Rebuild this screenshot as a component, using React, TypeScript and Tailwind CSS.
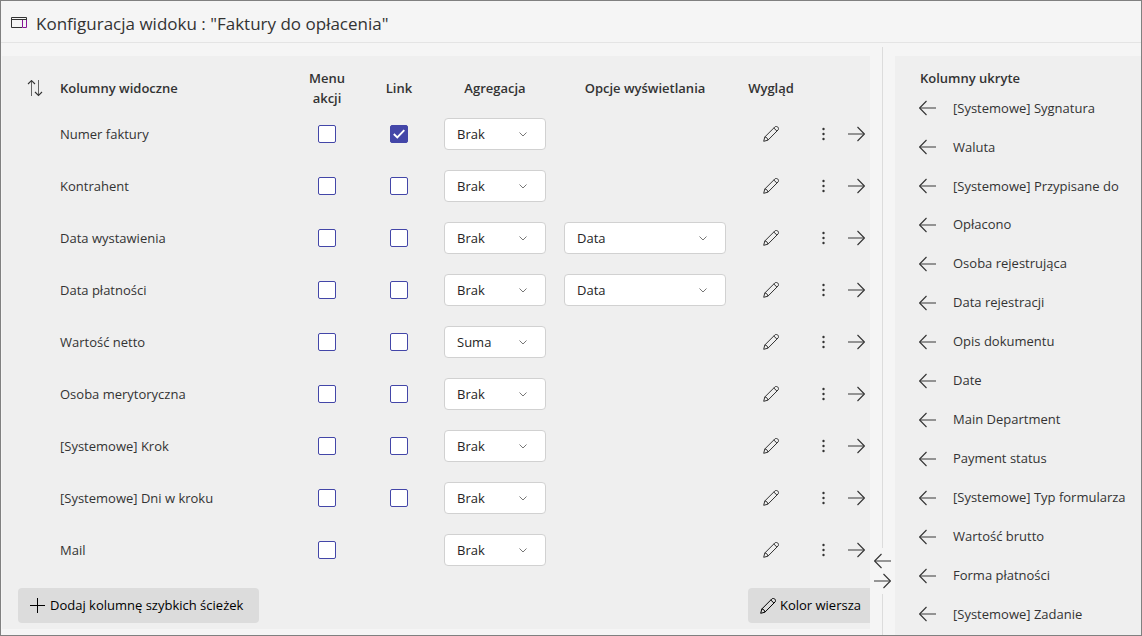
import { useState } from "react";

type Column = {
  name: string;
  link?: boolean;
  linked?: boolean;
  aggregation: string;
  display?: string;
};

const visibleColumns: Column[] = [
  { name: "Numer faktury", link: true, linked: true, aggregation: "Brak" },
  { name: "Kontrahent", link: true, aggregation: "Brak" },
  { name: "Data wystawienia", link: true, aggregation: "Brak", display: "Data" },
  { name: "Data płatności", link: true, aggregation: "Brak", display: "Data" },
  { name: "Wartość netto", link: true, aggregation: "Suma" },
  { name: "Osoba merytoryczna", link: true, aggregation: "Brak" },
  { name: "[Systemowe] Krok", link: true, aggregation: "Brak" },
  { name: "[Systemowe] Dni w kroku", link: true, aggregation: "Brak" },
  { name: "Mail", aggregation: "Brak" },
];

const hiddenColumns = [
  "[Systemowe] Sygnatura",
  "Waluta",
  "[Systemowe] Przypisane do",
  "Opłacono",
  "Osoba rejestrująca",
  "Data rejestracji",
  "Opis dokumentu",
  "Date",
  "Main Department",
  "Payment status",
  "[Systemowe] Typ formularza",
  "Wartość brutto",
  "Forma płatności",
  "[Systemowe] Zadanie",
];

function ViewIcon() {
  return (
    <svg width="16" height="14" viewBox="0 0 16 14" fill="none" aria-hidden="true">
      <path d="M11.5 3V10.5H15.5V3" stroke="#881798" />
      <path d="M11 10.5H0.5V0.5H15.5V3M0.5 2.5H15.5" stroke="#333" />
    </svg>
  );
}

function ArrowIcon({ left = false }: { left?: boolean }) {
  return (
    <svg width="17" height="16" viewBox="0 0 17 16" fill="none" className="shrink-0" aria-hidden="true">
      <path d={left ? "M1 8H17" : "M0 8H16"} stroke="#555" strokeWidth="1.2" />
      <path d={left ? "M7.5 1L0.6 8L7.5 15" : "M9.5 1L16.4 8L9.5 15"} stroke="#333" strokeWidth="1.1" />
    </svg>
  );
}

function SortIcon() {
  return (
    <svg width="16" height="17" viewBox="0 0 16 17" fill="none" aria-hidden="true">
      <path d="M4.5 1V16M11.5 0V15" stroke="#666" />
      <path d="M1 4L4.5 0.6L8 4M8 12L11.5 15.4L15 12" stroke="#333" strokeWidth="1.1" />
    </svg>
  );
}

function PencilIcon() {
  return (
    <svg width="16" height="16" viewBox="0 0 16 16" fill="none" stroke="currentColor" className="shrink-0" aria-hidden="true">
      <path d="M0.7 15.3L1.8 11L11.9 0.9C12.7 0.2 14 0.3 14.8 1.1C15.7 1.9 15.8 3.2 15 4L4.9 14.2L0.7 15.3Z" />
      <path d="M10.8 2L14 5.2M1.8 11C3.5 11.1 4.8 12.4 4.9 14.2" />
    </svg>
  );
}

function MoreIcon() {
  return (
    <svg width="4" height="14" viewBox="0 0 4 14" fill="#333" aria-hidden="true">
      <circle cx="2.5" cy="2" r="1.2" />
      <circle cx="2.5" cy="7" r="1.2" />
      <circle cx="2.5" cy="12" r="1.2" />
    </svg>
  );
}

function PlusIcon() {
  return (
    <svg width="16" height="16" viewBox="0 0 16 16" stroke="currentColor" className="shrink-0" aria-hidden="true">
      <path d="M7.5 0V15M0 7.5H15" />
    </svg>
  );
}

function Checkbox({ label, defaultChecked = false }: { label: string; defaultChecked?: boolean }) {
  const [checked, setChecked] = useState(defaultChecked);

  return (
    <span className="relative mx-auto block size-[18px]">
      <input
        type="checkbox"
        aria-label={label}
        checked={checked}
        onChange={(e) => setChecked(e.target.checked)}
        className="block size-[18px] appearance-none rounded-xs border border-[#4346a8] bg-white checked:bg-[#4346a8]"
      />
      {checked && (
        <svg width="18" height="18" viewBox="0 0 18 18" fill="none" className="pointer-events-none absolute inset-0" aria-hidden="true">
          <path d="M3.8 9L7.3 12.5L14.3 5.2" stroke="#fff" strokeWidth="1.9" />
        </svg>
      )}
    </span>
  );
}

function Select({ label, value, options }: { label: string; value: string; options: string[] }) {
  return (
    <span className="relative block">
      <select
        aria-label={label}
        defaultValue={value}
        className="block h-8 w-full appearance-none rounded border border-[#d1d1d1] bg-white pt-0.5 pr-8 pl-3 text-[#242424]"
      >
        {options.map((option) => (
          <option key={option}>{option}</option>
        ))}
      </select>
      <svg width="8" height="5" viewBox="0 0 8 5" fill="none" stroke="#777" className="pointer-events-none absolute top-[14px] right-[19px]" aria-hidden="true">
        <path d="M0.5 0.5L4 4L7.5 0.5" />
      </svg>
    </span>
  );
}

function VisibleColumns() {
  return (
    <main className="mt-[13px] mb-1.5 ml-px flex min-w-0 flex-1 flex-col bg-[#efefef] pt-3 pb-1.5 pl-4">
      <table className="w-full table-fixed">
        <colgroup>
          <col className="w-[42px]" />
          <col />
          <col className="w-[72px]" />
          <col className="w-[72px]" />
          <col className="w-[120px]" />
          <col className="w-[180px]" />
          <col className="w-[72px]" />
          <col className="w-8" />
          <col className="w-[31px]" />
        </colgroup>
        <thead>
          <tr className="h-10 leading-5">
            <th className="pl-[9px] text-left">
              <button className="block" aria-label="Zmień kolejność">
                <SortIcon />
              </button>
            </th>
            <th className="text-left font-semibold">Kolumny widoczne</th>
            <th className="px-3 font-semibold">Menu akcji</th>
            <th className="font-semibold">Link</th>
            <th className="font-semibold">Agregacja</th>
            <th className="font-semibold">Opcje wyświetlania</th>
            <th className="font-semibold">Wygląd</th>
            <th></th>
            <th></th>
          </tr>
        </thead>
        <tbody>
          {visibleColumns.map((column) => (
            <tr key={column.name} className="h-13">
              <td></td>
              <td className="pt-0.5">{column.name}</td>
              <td>
                <Checkbox label={`Menu akcji: ${column.name}`} />
              </td>
              <td>
                {column.link && <Checkbox label={`Link: ${column.name}`} defaultChecked={column.linked} />}
              </td>
              <td className="px-[9px]">
                <Select label={`Agregacja: ${column.name}`} value={column.aggregation} options={["Brak", "Suma"]} />
              </td>
              <td className="px-[9px]">
                {column.display && (
                  <Select label={`Opcje wyświetlania: ${column.name}`} value={column.display} options={["Data"]} />
                )}
              </td>
              <td>
                <button className="mx-auto block text-[#333]" aria-label="Edytuj wygląd">
                  <PencilIcon />
                </button>
              </td>
              <td>
                <button className="mx-auto block" aria-label="Więcej">
                  <MoreIcon />
                </button>
              </td>
              <td className="pl-[9px]">
                <button className="block" aria-label="Ukryj kolumnę">
                  <ArrowIcon />
                </button>
              </td>
            </tr>
          ))}
        </tbody>
      </table>

      <div className="mt-3 flex justify-between text-black">
        <button className="flex h-[35px] items-center gap-1 rounded bg-[#dcdcdc] pr-4 pl-3">
          <PlusIcon />
          Dodaj kolumnę szybkich ścieżek
        </button>
        <button className="flex h-[35px] items-center gap-1 rounded-l bg-[#dcdcdc] pr-[9px] pl-3">
          <PencilIcon />
          Kolor wiersza
        </button>
      </div>
    </main>
  );
}

function Splitter() {
  return (
    <div className="flex w-[25px] shrink-0 flex-col items-center pt-1">
      <div className="w-px flex-1 bg-[#dcdcdc]" />
      <div className="flex flex-col gap-1 py-[5px]">
        <button aria-label="Przesuń w lewo">
          <ArrowIcon left />
        </button>
        <button aria-label="Przesuń w prawo">
          <ArrowIcon />
        </button>
      </div>
      <div className="h-[41px] w-px bg-[#dcdcdc]" />
    </div>
  );
}

function HiddenColumns() {
  return (
    <aside className="mt-[13px] flex w-[246px] shrink-0 flex-col bg-[#efefef] pt-3 pb-px pl-6">
      <h2 className="pl-px leading-5 font-semibold">Kolumny ukryte</h2>
      <ul className="flex flex-1 flex-col pt-px">
        {hiddenColumns.map((name) => (
          <li key={name} className="flex flex-1 items-center gap-[17px] whitespace-nowrap">
            <button aria-label={`Pokaż kolumnę ${name}`}>
              <ArrowIcon left />
            </button>
            {name}
          </li>
        ))}
      </ul>
    </aside>
  );
}

export default function App() {
  return (
    <div className="flex min-h-screen flex-col border border-[#808080] bg-[#f5f5f5] font-['Open_Sans','Noto_Sans',sans-serif] text-[13px] text-[#333]">
      <header className="flex h-[42px] items-center gap-[9px] border-b border-[#e4e4e4] px-2.5 pt-1">
        <ViewIcon />
        <h1 className="text-[17px]">Konfiguracja widoku : "Faktury do opłacenia"</h1>
      </header>
      <div className="flex flex-1">
        <VisibleColumns />
        <Splitter />
        <HiddenColumns />
      </div>
    </div>
  );
}
